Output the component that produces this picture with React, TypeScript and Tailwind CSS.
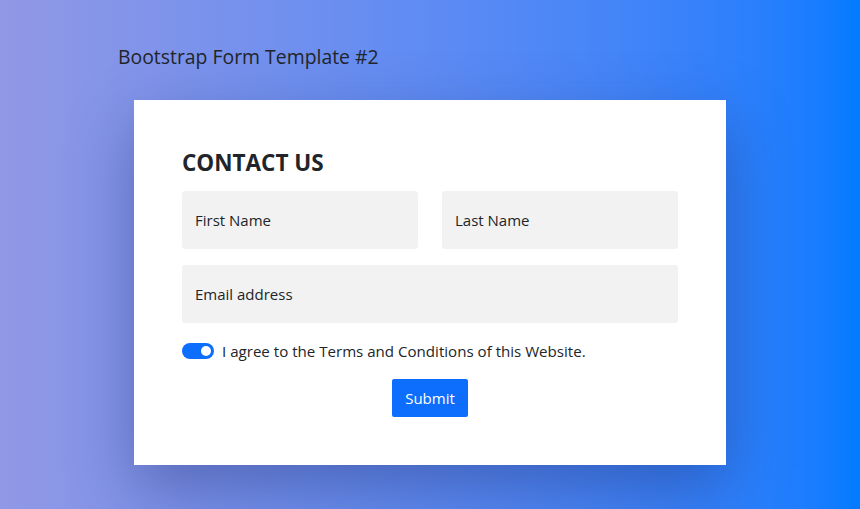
export default function App() {
  return (
    <div className="min-h-[509px] w-full bg-gradient-to-r from-[#9198e5] to-[#007bff] font-['Open_Sans','Noto_Sans',sans-serif] text-[#212529]">
      <div className="px-[118px] pt-[44px]">
        <h1 className="text-[19.4px] leading-[26px] font-medium">Bootstrap Form Template #2</h1>
      </div>
      <div className="mt-[30px] ml-[134px] w-[592px] h-[365px] bg-white px-[48px] pt-[48px] shadow-[0_24px_60px_rgba(20,30,90,0.35)]">
        <h2 className="text-[22.5px] leading-[30px] font-bold">CONTACT US</h2>
        <form className="mt-[13px] flex flex-col">
          <div className="flex gap-[24px]">
            <input
              placeholder="First Name"
              className="h-[58px] flex-1 min-w-0 rounded-[3px] bg-[#f2f2f2] px-[13px] text-[15px] placeholder:text-[#212529] outline-none"
            />
            <input
              placeholder="Last Name"
              className="h-[58px] flex-1 min-w-0 rounded-[3px] bg-[#f2f2f2] px-[13px] text-[15px] placeholder:text-[#212529] outline-none"
            />
          </div>
          <input
            placeholder="Email address"
            className="mt-[16px] h-[58px] rounded-[3px] bg-[#f2f2f2] px-[13px] text-[15px] placeholder:text-[#212529] outline-none"
          />
          <label className="mt-[16px] flex items-center gap-[8px] text-[15.1px] leading-[24px]">
            <span className="flex h-[16px] w-[32px] items-center justify-end rounded-full bg-[#0d6efd] pr-[3px]">
              <span className="h-[10px] w-[10px] rounded-full bg-white" />
            </span>
            I agree to the Terms and Conditions of this Website.
          </label>
          <div className="mt-[16px] flex justify-center">
            <button
              type="button"
              className="h-[38px] w-[76px] rounded-[2px] bg-[#0d6efd] text-[15px] text-white"
            >
              Submit
            </button>
          </div>
        </form>
      </div>
    </div>
  );
}
